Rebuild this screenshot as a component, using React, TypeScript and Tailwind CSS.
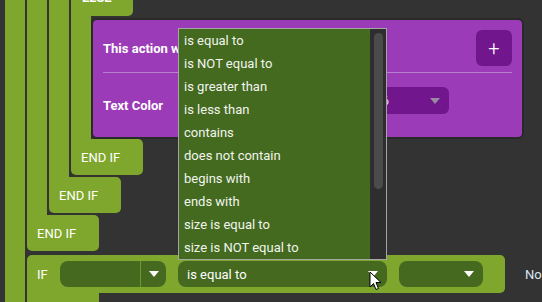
import React from 'react';

const options = [
  'is equal to',
  'is NOT equal to',
  'is greater than',
  'is less than',
  'contains',
  'does not contain',
  'begins with',
  'ends with',
  'size is equal to',
  'size is NOT equal to',
];

const Caret = ({ className }: { className: string }) => (
  <svg width="10" height="6" viewBox="0 0 10 6" className={className}>
    <path d="M0 0 L10 0 L5 6 Z" fill="currentColor" />
  </svg>
);

const EndIf: React.FC = () => (
  <div className="w-[72px] h-[36px] shrink-0 bg-[#7fa72e] rounded-r-[5px] rounded-bl-[5px] flex items-center pl-[10px] text-white">
    END IF
  </div>
);

export default function App() {
  return (
    <div className="relative w-[542px] h-[302px] overflow-hidden bg-[#333333] font-['Roboto',sans-serif] text-[13px] leading-[15px]">
      <div className="flex pl-[5px] -mt-[20px]">
        {/* outermost arm */}
        <div className="w-[20px] shrink-0 bg-[#7fa72e]" />
        <div className="ml-[2px] flex flex-col">
          <div className="flex">
            <div className="w-[20px] shrink-0 bg-[#7fa72e]" />
            <div className="ml-[2px] flex flex-col mb-[2px]">
              <div className="flex">
                <div className="w-[20px] shrink-0 bg-[#7fa72e]" />
                <div className="ml-[2px] flex flex-col mb-[2px]">
                  <div className="w-[62px] h-[36px] bg-[#7fa72e] rounded-br-[5px] pl-[11px] pt-[10px] text-white font-bold">ELSE</div>
                  <div className="flex">
                    <div className="w-[20px] shrink-0 bg-[#7fa72e]" />
                    <div className="mt-[2px] w-[433px] h-[121px] shrink-0 border-2 border-[#292929] rounded-[6px] bg-[#9c3bb8] px-[10px] pt-[10px]">
                      <div className="h-[36px] flex items-center justify-between">
                        <span className="font-bold text-white whitespace-nowrap">This action will run when</span>
                        <button className="w-[36px] h-[36px] rounded-[6px] bg-[#72168e] text-white text-[20px] font-light flex items-center justify-center">+</button>
                      </div>
                      <div className="mt-[6px] h-px bg-[#b77fd0]" />
                      <div className="mt-[14px] flex items-start">
                        <span className="mt-[11px] font-bold text-white whitespace-nowrap">Text Color</span>
                        <div className="ml-auto mr-[63px] w-[160px] h-[27px] rounded-[6px] bg-[#72168e] flex items-center justify-end pr-[9px]">
                          <span className="text-[#ecd8f2] whitespace-nowrap">Color 6</span>
                          <span className="w-[41px]" />
                          <Caret className="text-[#9a8aa0]" />
                        </div>
                      </div>
                    </div>
                  </div>
                  <EndIf />
                </div>
              </div>
              <EndIf />
            </div>
          </div>
          <EndIf />

          <div className="mt-[4px] flex items-center">
            <div className="w-[478px] h-[38px] shrink-0 bg-[#7fa72e] rounded-tl-[5px] rounded-r-[5px] flex items-center pl-[10px] text-white">
              <span className="w-[23px]">IF</span>
              <div className="w-[106px] h-[26px] rounded-[8px] bg-[#44691f] flex">
                <div className="flex-1" />
                <div className="w-[26px] border-l border-[#6f9a2c] flex items-center justify-center">
                  <Caret className="text-white" />
                </div>
              </div>
              <div className="ml-[12px] w-[209px] h-[26px] rounded-[8px] bg-[#44691f] flex items-center justify-between pl-[9px] pr-[9px]">
                <span>is equal to</span>
                <Caret className="text-white" />
              </div>
              <div className="ml-[12px] w-[84px] h-[26px] rounded-[8px] bg-[#44691f] flex items-center justify-end pr-[9px]">
                <Caret className="text-white" />
              </div>
            </div>
            <span className="ml-[20px] text-[#dce6f2] whitespace-nowrap">No</span>
          </div>
          <div className="w-[72px] h-[20px] bg-[#7fa72e]" />
        </div>
      </div>

      {/* open dropdown list */}
      <div className="absolute left-[178px] top-[28px] w-[209px] h-[232px] border border-[#a5a5a5] bg-[#436a1f] flex">
        <div className="flex-1 flex flex-col">
          {options.map((o) => (
            <div key={o} className="h-[23px] flex items-center pl-[5px] text-[#f2f4ee] whitespace-nowrap">
              {o}
            </div>
          ))}
        </div>
        <div className="w-[16px] bg-[#2e2e2e] pt-[4px] pl-[4px]">
          <div className="w-[9px] h-[156px] rounded-full bg-[#4b4b4b]" />
        </div>
      </div>

      {/* mouse pointer */}
      <svg className="absolute left-[369px] top-[271px]" width="14" height="21" viewBox="0 0 14 21">
        <path d="M1 1 L1 16 L4.5 12.5 L7 18.5 L9.5 17.5 L7 11.5 L12 11.5 Z" fill="white" stroke="black" strokeWidth="1" strokeLinejoin="round" />
      </svg>
    </div>
  );
}
